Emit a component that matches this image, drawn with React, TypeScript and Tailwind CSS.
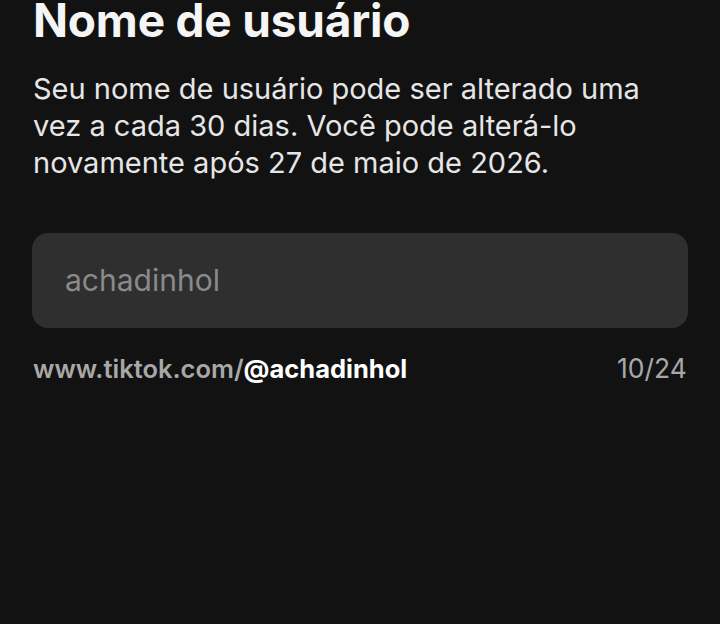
import React from 'react';

const App: React.FC = () => {
  return (
    <div
      className="w-[720px] h-[624px] overflow-hidden bg-[#121212] text-white px-[33px]"
      style={{ fontFamily: 'Inter, "Noto Sans", sans-serif' }}
    >
      <h1 className="text-[46px] leading-[46px] font-bold tracking-[-0.2px] text-[#f5f5f5] -mt-[3px]">
        Nome de usuário
      </h1>

      <p className="mt-[27px] max-w-[620px] text-[29px] leading-[37px] text-[#e6e6e6]">
        Seu nome de usuário pode ser alterado uma vez a cada 30 dias. Você pode alterá-lo novamente após 27 de
        maio de 2026.
      </p>

      <div className="mt-[52px] -mx-px h-[95px] rounded-[16px] bg-[#2f2f2f] flex items-center px-[33px]">
        <span className="text-[30px] text-[#8a8a8a]">achadinhol</span>
      </div>

      <div className="mt-[21px] flex items-center justify-between">
        <span className="text-[25.5px] font-semibold text-[#a8a8a8]">
          www.tiktok.com/<span className="text-white font-bold">@achadinhol</span>
        </span>
        <span className="text-[26.5px] text-[#a8a8a8]">10/24</span>
      </div>
    </div>
  );
};

export default App;
